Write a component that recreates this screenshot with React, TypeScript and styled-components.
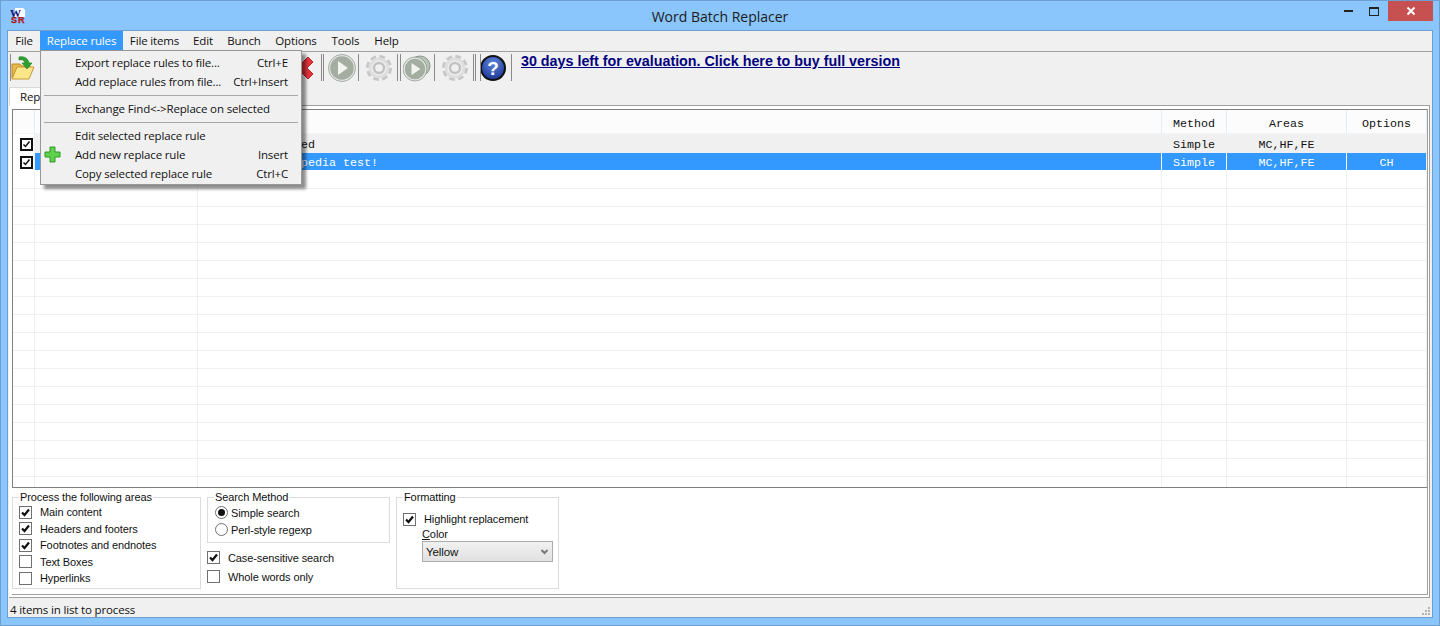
import styled, { createGlobalStyle } from "styled-components"

const GlobalStyle = createGlobalStyle`
    html, body {
        margin: 0;
        padding: 0;
    }
    * {
        box-sizing: border-box;
    }
`

const UI_FONT = `"Open Sans", "Noto Sans", sans-serif`
const LABEL_FONT = `"Liberation Sans", Arial, sans-serif`
const MONO_FONT = `"Liberation Mono", "Courier New", monospace`
const COLUMNS = "22px 163px 964px 65px 120px 80px"

const Window = styled.div`
    width: 1440px;
    height: 626px;
    display: flex;
    flex-direction: column;
    background: #8ac5fb;
    border: 1px solid #6f9ed0;
    overflow: hidden;
`

const TitleBar = styled.header`
    height: 29px;
    flex: none;
    display: grid;
    grid-template-columns: 1fr auto 1fr;
    align-items: center;
`

const AppLogo = styled.svg`
    width: 18px;
    height: 20px;
    margin: 0 0 0 9px;
`

const TitleText = styled.div`
    font: 14px ${UI_FONT};
    color: #1a1a1a;
    margin-top: 2px;
`

const WindowButtons = styled.div`
    display: flex;
    justify-self: end;
    align-self: start;
    margin-right: 6px;
`

const WindowButton = styled.div<{ $width: number; $close?: boolean }>`
    width: ${p => p.$width}px;
    height: 20px;
    display: flex;
    align-items: center;
    justify-content: center;
    background: ${p => (p.$close ? "#c75050" : "transparent")};
`

const Client = styled.main`
    margin: 0 6px 7px 6px;
    flex: 1;
    display: flex;
    flex-direction: column;
    background: #f0f0f0;
    border: 1px solid #6f9ed0;
    min-height: 0;
`

const MenuBar = styled.nav`
    height: 21px;
    flex: none;
    display: flex;
    border-bottom: 1px solid #a0a0a0;
    position: relative;
    z-index: 3;
`

const MenuEntry = styled.div<{ $active?: boolean; $width: number }>`
    width: ${p => p.$width}px;
    height: 19px;
    flex: none;
    position: relative;
    text-align: center;
    font: 11.5px/19px ${UI_FONT};
    letter-spacing: -0.15px;
    color: ${p => (p.$active ? "#fff" : "#111")};
    background: ${p => (p.$active ? "#3399ff" : "transparent")};
`

const Popup = styled.div`
    position: absolute;
    left: 0;
    top: 19px;
    width: 262px;
    height: 135px;
    padding: 2px 3px 0 1px;
    background: #f0f0f0;
    border: 1px solid #979797;
    box-shadow: 4px 4px 3px rgba(0, 0, 0, 0.45);
    text-align: left;
    color: #111;
`

const MenuRow = styled.div`
    display: grid;
    grid-template-columns: 33px 1fr auto;
    align-items: center;
    height: 19px;
    padding-right: 10px;
    font: 11.5px/19px ${UI_FONT};
    letter-spacing: -0.15px;
    white-space: nowrap;
`

const MenuDivider = styled.div<{ $height: number }>`
    height: ${p => p.$height}px;
    display: flex;
    align-items: center;
    padding-left: 2px;

    &::after {
        content: "";
        display: block;
        width: 100%;
        height: 1px;
        background: #a8a8a8;
    }
`

const Toolbar = styled.div`
    height: 33px;
    flex: none;
    display: flex;
    align-items: flex-start;
    padding: 2px 0 0 2px;
`

const ToolSep = styled.div<{ $gap?: number }>`
    width: 1px;
    height: 27px;
    flex: none;
    background: #8a8a8a;
    margin-left: ${p => p.$gap ?? 0}px;
`

const ToolIcon = styled.svg<{ $gap?: number; $size?: number }>`
    width: ${p => p.$size ?? 28}px;
    height: 28px;
    flex: none;
    margin-left: ${p => p.$gap ?? 0}px;
`

const BuyLink = styled.a`
    margin: -1px 0 0 9px;
    font: bold 14.3px/16px ${LABEL_FONT};
    color: #00007f;
    text-decoration: underline;
    white-space: nowrap;
`

const TabStrip = styled.div`
    height: 21px;
    flex: none;
    display: flex;
    align-items: flex-end;
    padding-left: 1px;
    margin-bottom: -1px;
    position: relative;
`

const Tab = styled.div`
    height: 19px;
    width: 90px;
    padding-left: 10px;
    background: #fff;
    border: 1px solid #d9d9d9;
    border-bottom: none;
    font: 11.5px/18px ${UI_FONT};
    letter-spacing: -0.15px;
    color: #111;
    white-space: nowrap;
    overflow: hidden;
`

const TabPane = styled.section`
    height: 493px;
    flex: none;
    margin: 0 2px 0 1px;
    padding: 3px 1px 0 3px;
    background: #fff;
    border-top: 1px solid #a0a0a0;
    border-right: 1px solid #a0a0a0;
    border-bottom: 1px solid #a0a0a0;
`

const PaneInner = styled.div`
    height: 486px;
    display: flex;
    flex-direction: column;
    border-right: 1px solid #a0a0a0;
    border-bottom: 1px solid #a0a0a0;
`

const RuleList = styled.div`
    height: 379px;
    flex: none;
    border: 1px solid #7f7f7f;
    border-right: none;
    overflow: hidden;
    font: 11.67px/18px ${MONO_FONT};
    color: #111;
`

const HeaderRow = styled.div`
    display: grid;
    grid-template-columns: ${COLUMNS};
    height: 24px;
    background: #fcfcfc;
    border-bottom: 1px solid #f2f5f9;
`

const HeaderCell = styled.div`
    border-right: 1px solid #e3ecf7;
    text-align: center;
    line-height: 28px;
`

const Row = styled.div<{ $state?: "marked" | "selected" }>`
    display: grid;
    grid-template-columns: ${COLUMNS};
    grid-template-rows: 100%;
    height: ${p => (p.$state === "marked" ? 19 : 18)}px;
    line-height: ${p => (p.$state === "marked" ? 22 : 20)}px;
    border-bottom: ${p => (p.$state === "marked" ? "none" : p.$state === "selected" ? "1px solid #fff" : "1px solid #f0f0f0")};
    background: ${p => (p.$state === "marked" ? "#f0f0f0" : p.$state === "selected" ? "#3399ff" : "#fff")};
    color: ${p => (p.$state === "selected" ? "#fff" : "#111")};
`

const Cell = styled.div<{ $align?: string; $selected?: boolean }>`
    border-right: 1px solid ${p => (p.$selected ? "#ffffff" : "#f0f0f0")};
    text-align: ${p => p.$align ?? "center"};
    padding-left: ${p => (p.$align === "left" ? "19px" : "0")};
    white-space: nowrap;
    overflow: hidden;
`

const CheckCell = styled.div<{ $bottom: number }>`
    display: flex;
    align-items: flex-end;
    background: #fff;
    border-right: 1px solid #f0f0f0;
    padding: 0 0 ${p => p.$bottom}px 7px;
`

const ListCheck = styled.svg`
    display: block;
    width: 13px;
    height: 13px;
`

const Options = styled.div`
    flex: 1;
    display: flex;
    padding-top: 3px;
    font: 11px/16px ${LABEL_FONT};
    letter-spacing: -0.1px;
    color: #111;
`

const GroupBox = styled.fieldset<{ $width: number; $height: number; $inset?: number }>`
    width: ${p => p.$width}px;
    height: ${p => p.$height}px;
    margin: 0;
    padding: 0 0 0 ${p => p.$inset ?? 6}px;
    border: 1px solid #dcdcdc;
    min-inline-size: 0;
`

const GroupLegend = styled.legend<{ $shift?: number }>`
    margin-left: ${p => p.$shift ?? 0}px;
    padding: 0 1px;
    line-height: 13px;
`

const Column = styled.div<{ $gap: number }>`
    margin-left: ${p => p.$gap}px;
    flex: none;
`

const OptionRow = styled.label<{ $height: number; $labelGap: number; $top?: number }>`
    display: flex;
    align-items: center;
    height: ${p => p.$height}px;
    margin-top: ${p => p.$top ?? 0}px;
    gap: ${p => p.$labelGap}px;
    white-space: nowrap;
`

const Tick = styled.span`
    width: 13px;
    height: 13px;
    flex: none;
    display: block;
    background: #fff;
    border: 1px solid #707070;
    position: relative;

    svg {
        position: absolute;
        left: 1px;
        top: 1px;
        display: block;
    }
`

const Radio = styled.span<{ $on?: boolean }>`
    width: 13px;
    height: 13px;
    flex: none;
    border-radius: 50%;
    background: #fff;
    border: 1px solid #707070;
    display: flex;
    align-items: center;
    justify-content: center;

    &::after {
        content: "";
        display: ${p => (p.$on ? "block" : "none")};
        width: 7px;
        height: 7px;
        border-radius: 50%;
        background: #111;
    }
`

const StandaloneOptions = styled.div`
    margin-top: 5px;
`

const ColorLabel = styled.div`
    margin: 0 0 0 19px;
    line-height: 14px;

    u {
        text-underline-offset: 1px;
    }
`

const ColorSelect = styled.div`
    width: 131px;
    height: 21px;
    margin: 0 0 0 19px;
    padding-left: 3px;
    display: flex;
    align-items: center;
    justify-content: space-between;
    background: linear-gradient(#f1f1f1, #e1e1e1);
    border: 1px solid #acacac;
    font-size: 11.5px;
`

const StatusBar = styled.footer`
    flex: 1;
    display: flex;
    align-items: flex-start;
    justify-content: space-between;
    padding: 3px 0 0 2px;
    font: 11.5px/17px ${UI_FONT};
    letter-spacing: -0.15px;
    color: #111;

    svg {
        margin-top: 5px;
    }
`

function CheckMark() {
    return (
        <svg width="9" height="9" viewBox="0 0 9 9">
            <path d="M1 4.5 L3.5 7 L8 1.5" fill="none" stroke="#111" strokeWidth="2.2" />
        </svg>
    )
}

function Check({ on }: { on?: boolean }) {
    return <Tick>{on && <CheckMark />}</Tick>
}

function ListCheckbox() {
    return (
        <ListCheck viewBox="0 0 13 13">
            <rect x="1" y="1" width="11" height="11" fill="#fff" stroke="#111" strokeWidth="2" />
            <path d="M3.5 6.5 L5.5 8.5 L9.5 3.5" fill="none" stroke="#111" strokeWidth="1.5" />
        </ListCheck>
    )
}

function PlayIcon({ gap, double }: { gap: number; double?: boolean }) {
    const cx = double ? 12 : 14
    const cy = double ? 15 : 14
    return (
        <ToolIcon $gap={gap} viewBox="0 0 28 28">
            {double && <circle cx="17" cy="12" r="10" fill="#b8c4b4" stroke="#8d988c" />}
            <circle cx={cx} cy={cy} r={double ? 11 : 12.5} fill="#a3ada0" stroke="#e2e6e1" strokeWidth="1.5" />
            <circle cx={cx} cy={cy} r={double ? 12 : 13.5} fill="none" stroke="#8f9a8f" strokeWidth="0.8" />
            <path d={double ? "M8.5 9 L17.5 15 L8.5 21 Z" : "M10 7 L20 14 L10 21 Z"} fill="#f2f3ef" />
        </ToolIcon>
    )
}

function GearIcon({ gap }: { gap: number }) {
    return (
        <ToolIcon $gap={gap} viewBox="0 0 28 28">
            <circle cx="14" cy="14" r="10.5" fill="none" stroke="#c6c6c6" strokeWidth="5" strokeDasharray="5.2 3.05" />
            <circle cx="14" cy="14" r="9" fill="none" stroke="#dedede" strokeWidth="3" />
            <circle cx="14" cy="14" r="5" fill="none" stroke="#c2c2c2" strokeWidth="2.5" />
        </ToolIcon>
    )
}

const MENU_ITEMS = [
    { name: "File", width: 32 },
    { name: "Replace rules", width: 83 },
    { name: "File items", width: 63 },
    { name: "Edit", width: 34 },
    { name: "Bunch", width: 48 },
    { name: "Options", width: 56 },
    { name: "Tools", width: 43 },
    { name: "Help", width: 39 },
]

const RULES = [
    { replace: "To be replaced", method: "Simple", areas: "MC,HF,FE", options: "", state: "marked" as const },
    { replace: "This is Softpedia test!", method: "Simple", areas: "MC,HF,FE", options: "CH", state: "selected" as const },
]

function App() {
    return (
        <Window>
            <GlobalStyle />
            <TitleBar>
                <AppLogo viewBox="0 0 18 20">
                    <path d="M5 2 H13 L15 4 V11 H5 Z" fill="#fff" />
                    <text x="0" y="11" fontFamily="Liberation Serif" fontWeight="bold" fontSize="11" fill="#16167a">W</text>
                    <text x="1" y="17" fontFamily="Liberation Sans" fontWeight="bold" fontSize="9" letterSpacing="1" fill="#e01010" stroke="#5a0a0a" strokeWidth="0.25">SR</text>
                </AppLogo>
                <TitleText>Word Batch Replacer</TitleText>
                <WindowButtons>
                    <WindowButton $width={26}>
                        <svg width="9" height="4"><rect y="1" width="9" height="2" fill="#222" /></svg>
                    </WindowButton>
                    <WindowButton $width={27}>
                        <svg width="11" height="9"><rect x="0.5" y="0.5" width="9" height="8" fill="none" stroke="#222" /><rect width="10" height="2" fill="#222" /></svg>
                    </WindowButton>
                    <WindowButton $width={45} $close>
                        <svg width="10" height="10"><path d="M1.5 1.5 L8.5 8.5 M8.5 1.5 L1.5 8.5" stroke="#fff" strokeWidth="2" /></svg>
                    </WindowButton>
                </WindowButtons>
            </TitleBar>
            <Client>
                <MenuBar>
                    {MENU_ITEMS.map(item => (
                        <MenuEntry key={item.name} $width={item.width} $active={item.name === "Replace rules"}>
                            {item.name}
                            {item.name === "Replace rules" && (
                                <Popup>
                                    <MenuRow><span /><span>Export replace rules to file...</span><span>Ctrl+E</span></MenuRow>
                                    <MenuRow><span /><span>Add replace rules from file...</span><span>Ctrl+Insert</span></MenuRow>
                                    <MenuDivider $height={8} />
                                    <MenuRow><span /><span>{"Exchange Find<->Replace on selected"}</span><span /></MenuRow>
                                    <MenuDivider $height={8} />
                                    <MenuRow><span /><span>Edit selected replace rule</span><span /></MenuRow>
                                    <MenuRow>
                                        <svg width="17" height="17" viewBox="0 0 17 17" style={{ marginLeft: 2 }}>
                                            <path d="M6 1 H11 V6 H16 V11 H11 V16 H6 V11 H1 V6 H6 Z" fill="#5fd14e" stroke="#2c9a22" />
                                        </svg>
                                        <span>Add new replace rule</span>
                                        <span>Insert</span>
                                    </MenuRow>
                                    <MenuRow><span /><span>Copy selected replace rule</span><span>Ctrl+C</span></MenuRow>
                                </Popup>
                            )}
                        </MenuEntry>
                    ))}
                </MenuBar>
                <Toolbar>
                    <ToolSep />
                    <ToolIcon $size={24} viewBox="0 0 24 28">
                        <path d="M1 10 H9 L11 12 H19 V14 H6 L1 24 Z" fill="#e9b94c" stroke="#b98a25" />
                        <path d="M1 25 L6 13 H23 L18 25 Z" fill="#fde58a" stroke="#c79a31" />
                        <path d="M8 3 C13 2 17 4 18 9 L21 9 L16 15 L11 9 L14 9 C13 6 11 5 8 6 Z" fill="#2fa12f" stroke="#187a18" strokeWidth="0.6" />
                    </ToolIcon>
                    <ToolIcon $gap={253} viewBox="0 0 28 28">
                        <path d="M4 8 L9 3 L14 9 L20 3 L25 8 L19 14 L25 20 L20 25 L14 19 L9 25 L4 20 L10 14 Z" fill="#e0333c" stroke="#c0222a" />
                    </ToolIcon>
                    <ToolSep $gap={5} />
                    <ToolSep $gap={1} />
                    <PlayIcon gap={4} />
                    <ToolSep $gap={2} />
                    <GearIcon gap={6} />
                    <ToolSep $gap={4} />
                    <ToolSep $gap={2} />
                    <PlayIcon gap={2} double />
                    <ToolSep $gap={3} />
                    <GearIcon gap={6} />
                    <ToolSep $gap={4} />
                    <ToolSep $gap={1} />
                    <ToolSep $gap={4} />
                    <ToolIcon viewBox="0 0 28 28">
                        <defs>
                            <radialGradient id="helpFill" cx="50%" cy="30%" r="75%">
                                <stop offset="0%" stopColor="#5f86dc" />
                                <stop offset="100%" stopColor="#16308f" />
                            </radialGradient>
                        </defs>
                        <circle cx="12" cy="14" r="12" fill="url(#helpFill)" stroke="#111" strokeWidth="2" />
                        <text x="12" y="21" textAnchor="middle" fontFamily="Liberation Sans" fontWeight="bold" fontSize="19" fill="#fff">?</text>
                    </ToolIcon>
                    <ToolSep $gap={2} />
                    <BuyLink>30 days left for evaluation. Click here to buy full version</BuyLink>
                </Toolbar>
                <TabStrip>
                    <Tab>Replace rules</Tab>
                </TabStrip>
                <TabPane>
                    <PaneInner>
                        <RuleList>
                            <HeaderRow>
                                <HeaderCell />
                                <HeaderCell />
                                <HeaderCell />
                                <HeaderCell>Method</HeaderCell>
                                <HeaderCell>Areas</HeaderCell>
                                <HeaderCell>Options</HeaderCell>
                            </HeaderRow>
                            {RULES.map(rule => {
                                const selected = rule.state === "selected"
                                return (
                                    <Row key={rule.replace} $state={rule.state}>
                                        <CheckCell $bottom={selected ? 1 : 2}><ListCheckbox /></CheckCell>
                                        <Cell $selected={selected} />
                                        <Cell $align="left" $selected={selected}>{rule.replace}</Cell>
                                        <Cell $selected={selected}>{rule.method}</Cell>
                                        <Cell $selected={selected}>{rule.areas}</Cell>
                                        <Cell>{rule.options}</Cell>
                                    </Row>
                                )
                            })}
                            {Array.from({ length: 18 }, (_, i) => (
                                <Row key={i}>
                                    <Cell /><Cell /><Cell /><Cell /><Cell /><Cell />
                                </Row>
                            ))}
                        </RuleList>
                        <Options>
                            <GroupBox $width={189} $height={98}>
                                <GroupLegend>Process the following areas</GroupLegend>
                                <OptionRow $height={16.5} $labelGap={8}><Check on />Main content</OptionRow>
                                <OptionRow $height={16.5} $labelGap={8}><Check on />Headers and footers</OptionRow>
                                <OptionRow $height={16.5} $labelGap={8}><Check on />Footnotes and endnotes</OptionRow>
                                <OptionRow $height={16.5} $labelGap={8}><Check />Text Boxes</OptionRow>
                                <OptionRow $height={16.5} $labelGap={8}><Check />Hyperlinks</OptionRow>
                            </GroupBox>
                            <Column $gap={6}>
                                <GroupBox $width={183} $height={52} $inset={7}>
                                    <GroupLegend $shift={-1}>Search Method</GroupLegend>
                                    <OptionRow $height={17} $labelGap={3}><Radio $on />Simple search</OptionRow>
                                    <OptionRow $height={17} $labelGap={3}><Radio />Perl-style regexp</OptionRow>
                                </GroupBox>
                                <StandaloneOptions>
                                    <OptionRow $height={19} $labelGap={8}><Check on />Case-sensitive search</OptionRow>
                                    <OptionRow $height={19} $labelGap={8}><Check />Whole words only</OptionRow>
                                </StandaloneOptions>
                            </Column>
                            <Column $gap={6}>
                                <GroupBox $width={163} $height={98}>
                                    <GroupLegend>Formatting</GroupLegend>
                                    <OptionRow $height={16} $top={7} $labelGap={8}><Check on />Highlight replacement</OptionRow>
                                    <ColorLabel><u>C</u>olor</ColorLabel>
                                    <ColorSelect>
                                        Yellow
                                        <svg width="18" height="10" viewBox="0 0 18 10">
                                            <path d="M7.5 3 L10.5 6 L13.5 3" fill="none" stroke="#777" strokeWidth="2" />
                                        </svg>
                                    </ColorSelect>
                                </GroupBox>
                            </Column>
                        </Options>
                    </PaneInner>
                </TabPane>
                <StatusBar>
                    4 items in list to process
                    <svg width="12" height="12" viewBox="0 0 12 12">
                        <path d="M8 1h2v2H8zM5 4h2v2H5zM8 4h2v2H8zM2 7h2v2H2zM5 7h2v2H5zM8 7h2v2H8z" fill="#b4b4b4" />
                    </svg>
                </StatusBar>
            </Client>
        </Window>
    )
}

export default App
